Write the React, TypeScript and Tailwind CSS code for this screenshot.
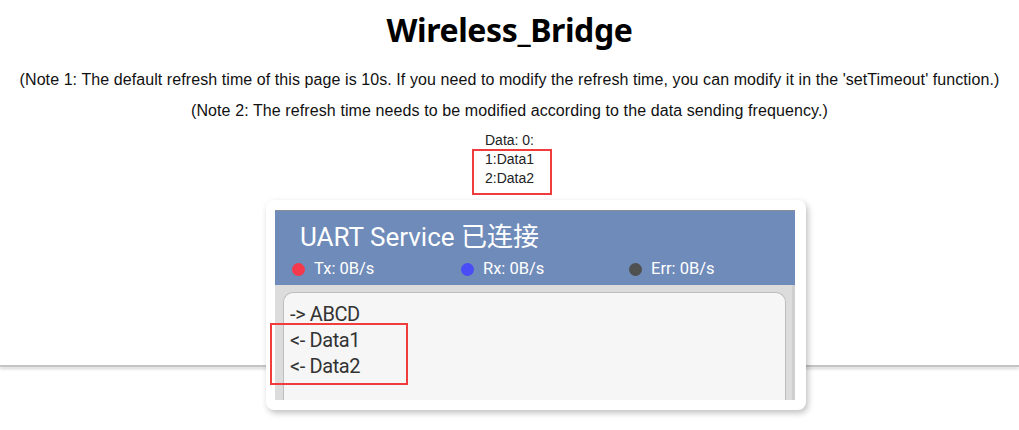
import React from "react";

export default function App() {
  return (
    <div className="relative w-[1019px] h-[430px] overflow-hidden bg-white text-black">
      <h1 className="pt-[10px] text-center text-[32px] leading-[40px] font-bold font-['Noto_Sans',sans-serif] tracking-[-0.4px]">
        Wireless_Bridge
      </h1>
      <p className="mt-[20px] text-center text-[16px] leading-[20px] font-['Liberation_Sans',sans-serif] text-[#111] tracking-[0.08px]">
        (Note 1: The default refresh time of this page is 10s. If you need to modify the refresh time, you can modify it in the 'setTimeout' function.)
      </p>
      <p className="mt-[11px] text-center text-[16px] leading-[20px] font-['Liberation_Sans',sans-serif] text-[#111] tracking-[0.1px]">
        (Note 2: The refresh time needs to be modified according to the data sending frequency.)
      </p>
      <div className="relative mt-[10px] flex flex-col items-center text-[14px] leading-[19px] font-['Liberation_Sans',sans-serif] text-[#222]">
        <div>Data: 0:</div>
        <div>1:Data1</div>
        <div>2:Data2</div>
        <div className="absolute left-[472px] top-[18px] w-[80px] h-[46px] border-2 border-[#f03c3c]" />
      </div>

      <div className="relative mt-[12px] flex pl-[266px]">
        <div className="absolute left-0 right-0 top-[165px] h-[2px] bg-[#c4c4c4] shadow-[0_2px_3px_rgba(0,0,0,0.2)]" />
        <div className="relative w-[540px] h-[210px] rounded-[8px] bg-white pt-[10px] pl-[9px] pr-[11px] pb-[10px] shadow-[2px_3px_6px_rgba(0,0,0,0.25)] font-['Roboto',sans-serif]">
          <div className="flex flex-col w-[520px] h-[190px] overflow-hidden">
            <div className="shrink-0 h-[75px] bg-[#6f8bb9] border-t border-[#8a8f96] text-white">
              <div className="pl-[25px] pt-[11px] text-[26px] leading-[30px] font-['Roboto','Noto_Sans_CJK_SC',sans-serif]">
                UART Service 已连接
              </div>
              <div className="flex items-center mt-[7px] text-[16.5px] leading-[20px]">
                <div className="flex items-center pl-[17px] w-[188px]">
                  <span className="w-[13px] h-[13px] rounded-full bg-[#f4394c]" />
                  <span className="ml-[9px]">Tx: 0B/s</span>
                </div>
                <div className="flex items-center w-[166px] ml-[-2px]">
                  <span className="w-[13px] h-[13px] rounded-full bg-[#4a4cf6]" />
                  <span className="ml-[9px]">Rx: 0B/s</span>
                </div>
                <div className="flex items-center ml-[2px]">
                  <span className="w-[13px] h-[13px] rounded-full bg-[#4f5050]" />
                  <span className="ml-[9px]">Err: 0B/s</span>
                </div>
              </div>
            </div>
            <div className="flex-1 min-h-0 bg-[#dcdcdc] pt-[7px] pl-[8px] pr-[6px] border-r-[3px] border-[#cfcfcf]">
              <div className="h-[120px] rounded-t-[10px] border border-b-0 border-[#bdbdbd] bg-[#f6f6f6] pl-[6px] pt-[8px] text-[20px] leading-[26px] text-[#333] tracking-[-0.4px]">
                <div>-&gt; ABCD</div>
                <div>&lt;- Data1</div>
                <div>&lt;- Data2</div>
              </div>
            </div>
          </div>
          <div className="absolute left-[4px] top-[123px] w-[138px] h-[62px] border-2 border-[#f03c3c]" />
        </div>
      </div>
    </div>
  );
}
